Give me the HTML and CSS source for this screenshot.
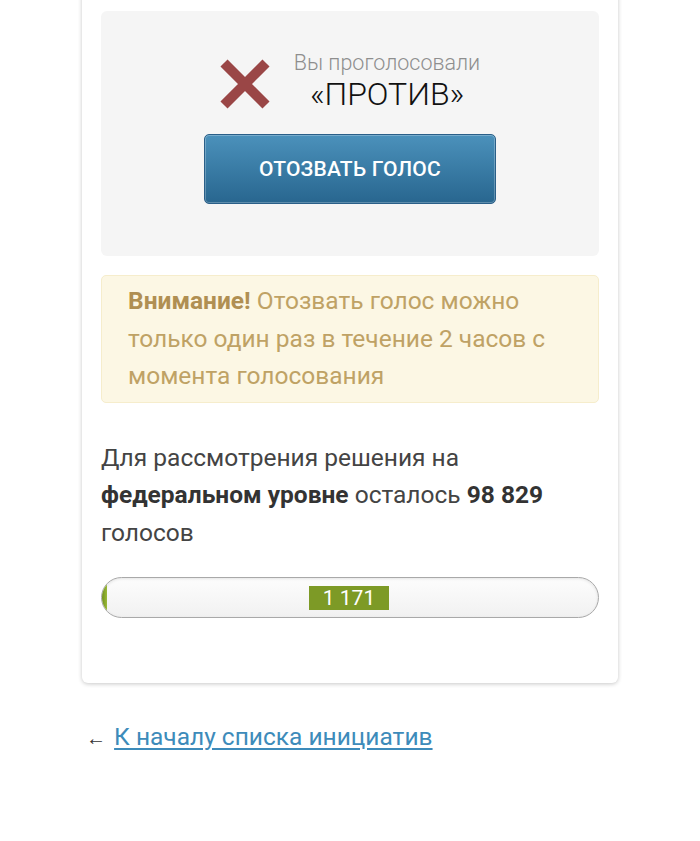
FILE: index.html
```html
<!DOCTYPE html>
<html lang="ru">
<head>
<meta charset="utf-8">
<link rel="stylesheet" href="styles.css">
</head>
<body>
<div class="card">
  <div class="vote-panel">
    <div class="vote-row">
      <svg class="x-icon" width="50" height="50" viewBox="0 0 50 50">
        <path d="M4 4 L46 46 M46 4 L4 46" stroke="#9a4646" stroke-width="10" stroke-linecap="butt"/>
      </svg>
      <div class="vote-text">
        <div class="vote-label">Вы проголосовали</div>
        <div class="vote-value">«ПРОТИВ»</div>
      </div>
    </div>
    <button class="revoke-btn">Отозвать голос</button>
  </div>
  <div class="warning"><b>Внимание!</b> Отозвать голос можно только один раз в течение 2 часов с момента голосования</div>
  <p class="remaining">Для рассмотрения решения на <b>федеральном уровне</b> осталось <b>98 829</b> голосов</p>
  <div class="progress">
    <div class="progress-fill" style="width:0.5%"></div>
    <span class="progress-label">1 171</span>
  </div>
</div>
<div class="back"><span class="arrow">←</span> <a href="#">К началу списка инициатив</a></div>
</body>
</html>
```
FILE: styles.css
```css
html, body {
  margin: 0;
  padding: 0;
  background: #fff;
  font-family: Roboto, "Noto Sans", sans-serif;
}
.card {
  width: 498px;
  margin: -30px 0 0 82px;
  padding: 41px 19px 65px;
  background: #fff;
  border-radius: 6px;
  box-shadow: 0 1px 4px rgba(0,0,0,0.22);
}
.vote-panel {
  background: #f5f5f5;
  border-radius: 6px;
  padding: 39px 0 52px;
  display: flex;
  flex-direction: column;
  align-items: center;
}
.vote-row {
  display: flex;
  align-items: center;
  gap: 24px;
}
.x-icon { display: block; margin-top: 4px; }
.vote-text { text-align: center; }
.vote-label {
  font-size: 21.5px;
  line-height: 25px;
  font-weight: 300;
  color: #8e8e8e;
}
.vote-value {
  font-size: 32px;
  line-height: 38px;
  font-weight: 300;
  color: #111;
}
.revoke-btn {
  margin-top: 21px;
  width: 292px;
  height: 70px;
  border: 1px solid #2a5f88;
  border-radius: 5px;
  background: linear-gradient(#4b91bb, #28668f);
  box-shadow: inset 0 0 0 1px rgba(255,255,255,0.25);
  color: #fff;
  font-family: Roboto, sans-serif;
  font-size: 21px;
  font-weight: 500;
  text-transform: uppercase;
  letter-spacing: 0.2px;
}
.warning {
  margin-top: 19px;
  background: #fcf7e4;
  border: 1px solid #f6edcc;
  border-radius: 5px;
  padding: 6px 26px 7px;
  font-size: 24.5px;
  line-height: 37.5px;
  font-weight: 400;
  color: #bfa265;
}
.warning b { font-weight: 700; color: #b08f52; }
.remaining {
  margin: 36px 0 0;
  font-size: 24.5px;
  line-height: 37.5px;
  color: #444;
}
.remaining b { color: #333; font-weight: 700; }
.progress {
  margin-top: 26px;
  height: 39px;
  border: 1.5px solid #a9a9a9;
  border-radius: 22px;
  background: linear-gradient(#fdfdfd, #f1f1f1);
  box-shadow: inset 0 1px 3px rgba(0,0,0,0.1);
  display: flex;
  align-items: center;
  justify-content: center;
  position: relative;
  overflow: hidden;
}
.progress-fill {
  position: absolute;
  left: 0;
  top: 0;
  bottom: 0;
  min-width: 5px;
  background: linear-gradient(90deg, #6f8f1c, #9cbb3a);
  border-radius: 22px 0 0 22px;
}
.progress-label {
  position: relative;
  background: #7d9a26;
  color: #fff;
  font-size: 21px;
  line-height: 24px;
  padding: 0 14px;
  min-width: 50px;
  white-space: nowrap;
  text-align: center;
  margin-left: -2px;
}
.back {
  margin: 39px 0 0 86px;
  font-size: 24.5px;
  line-height: 30px;
}
.arrow { color: #333; font-size: 20px; }
.back a {
  color: #3d8bba;
  text-decoration: underline;
  text-underline-offset: 3px;
  margin-left: 2px;
}
```
